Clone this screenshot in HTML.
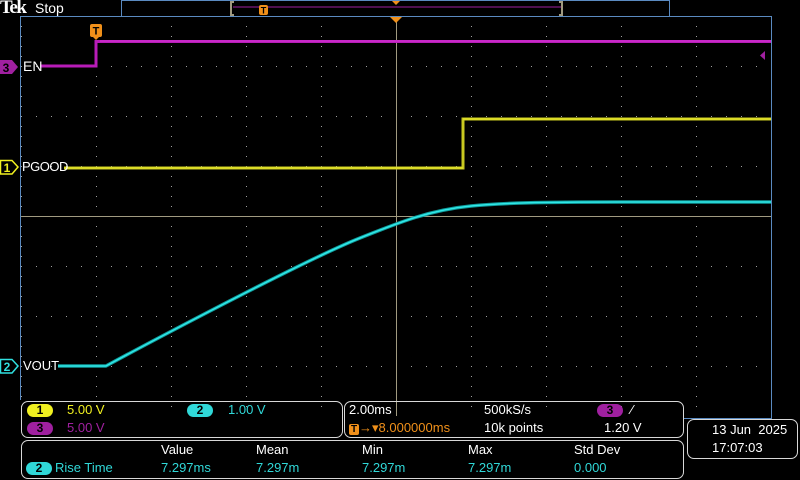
<!DOCTYPE html>
<html><head><meta charset="utf-8"><style>
html,body{margin:0;padding:0;background:#000;width:800px;height:480px;overflow:hidden}
body{position:relative;font-family:"Liberation Sans",sans-serif;color:#fff}
.t{position:absolute;font-size:13px;white-space:nowrap;line-height:14px}
.box{position:absolute;border:1px solid #d8d8d8;border-radius:7px}
.pill{display:inline-block;border-radius:8px;color:#000;font-weight:bold;text-align:center;width:26px;height:13px;line-height:13px;font-size:12px}
</style></head><body>
<svg width="800" height="480" style="position:absolute;left:0;top:0">
<defs>
<pattern id="g" x="21" y="16" width="75" height="50" patternUnits="userSpaceOnUse">
<g fill="#a0a0a0">
<rect x="0" y="0" width="1" height="1"/><rect x="0" y="10" width="1" height="1"/><rect x="0" y="20" width="1" height="1"/><rect x="0" y="30" width="1" height="1"/><rect x="0" y="40" width="1" height="1"/>
<rect x="15" y="0" width="1" height="1"/><rect x="30" y="0" width="1" height="1"/><rect x="45" y="0" width="1" height="1"/><rect x="60" y="0" width="1" height="1"/>
</g></pattern>
</defs>
<rect x="121.5" y="0.5" width="548" height="16" fill="none" stroke="#5a8ac0"/>
<line x1="233" y1="7" x2="561" y2="7" stroke="#a020a0" stroke-width="1"/>
<path d="M234 2 L231 2 L231 15 L234 15" fill="none" stroke="#a09a80" stroke-width="2"/>
<path d="M559 2 L562 2 L562 15 L559 15" fill="none" stroke="#a09a80" stroke-width="2"/>
<rect x="259" y="5" width="9" height="10" rx="2" fill="#f0901a"/>
<text x="263.5" y="13.5" font-size="9" font-weight="bold" text-anchor="middle" fill="#000" font-family="Liberation Sans">T</text>
<path d="M392 1 L400 1 L396 5 Z" fill="#f0901a"/>
<rect x="21" y="16" width="750" height="400" fill="url(#g)"/>
<line x1="21" y1="216.5" x2="771" y2="216.5" stroke="#a09a80"/>
<line x1="396.5" y1="16" x2="396.5" y2="416" stroke="#a09a80"/>
<path d="M20.5 400 L20.5 16.5 L771.5 16.5 L771.5 418.5 L683 418.5" fill="none" stroke="#5a8ac0"/>
<path d="M390 17 L402 17 L396 23 Z" fill="#f0901a"/>
<rect x="90" y="24" width="12" height="13" rx="2" fill="#f0901a"/>
<text x="96" y="34.5" font-size="11" font-weight="bold" text-anchor="middle" fill="#000" font-family="Liberation Sans">T</text>
<path d="M93 37 L99 37 L96 40Z" fill="#f0901a"/>
<path d="M40 66 L96 66 L96 41.5 L771 41.5" fill="none" stroke="#b81cb8" stroke-width="3"/>
<path d="M100 41 L771 41" fill="none" stroke="#e040e0" stroke-width="1" opacity="0.8"/>
<path d="M760 55.5 L765 51 L765 60 Z" fill="#a020a0"/>
<path d="M64 168 L463 168 L463 119 L771 119" fill="none" stroke="#c8c820" stroke-width="3"/>
<path d="M64 168 L463 168 M463 119 L771 119" fill="none" stroke="#f0f030" stroke-width="1"/>
<path id="v" d="M58 366 L106 366 C130 353 300 262 360 238 C400 222 430 210 471 206 C500 203 540 202 620 202 L771 202" fill="none" stroke="#109a9a" stroke-width="3.5" stroke-linejoin="round"/>
<path d="M58 366 L106 366 C130 353 300 262 360 238 C400 222 430 210 471 206 C500 203 540 202 620 202 L771 202" fill="none" stroke="#30e8e8" stroke-width="1.5" stroke-linejoin="round"/>
<path d="M0 60 L12 60 L18 67 L12 74 L0 74 Z" fill="#a020a0"/>
<text x="6" y="72" font-size="12" font-weight="bold" fill="#000" text-anchor="middle" font-family="Liberation Sans">3</text>
<path d="M0.5 160.5 L12 160.5 L18 167 L12 174 L0.5 174 Z" fill="#000" stroke="#f0f020" stroke-width="1.5"/>
<text x="7" y="172" font-size="12" font-weight="bold" fill="#f0f020" text-anchor="middle" font-family="Liberation Sans">1</text>
<path d="M0.5 359.5 L12 359.5 L18 366 L12 373 L0.5 373 Z" fill="#000" stroke="#30e0e0" stroke-width="1.5"/>
<text x="7" y="371" font-size="12" font-weight="bold" fill="#30e0e0" text-anchor="middle" font-family="Liberation Sans">2</text>
</svg>
<div class="t" style="left:0;top:0;font-family:'Liberation Serif',serif;font-weight:bold;font-size:19px;line-height:16px;letter-spacing:-1.5px">Tek</div>
<div class="t" style="left:35px;top:1px;font-size:14px">Stop</div>
<div class="t" style="left:23px;top:59px;font-size:14px">EN</div>
<div class="t" style="left:22px;top:160px;font-size:13px;letter-spacing:-0.5px">PGOOD</div>
<div class="t" style="left:23px;top:359px;font-size:13px">VOUT</div>

<div class="box" style="left:21px;top:401px;width:320px;height:35px"></div>
<div class="box" style="left:344px;top:401px;width:338px;height:35px"></div>
<div class="box" style="left:21px;top:440px;width:661px;height:37px"></div>
<div class="box" style="left:687px;top:419px;width:109px;height:38px"></div>

<div class="t" style="left:27px;top:403px"><span class="pill" style="background:#f0f020">1</span></div>
<div class="t" style="left:67px;top:403px;color:#f0f020">5.00 V</div>
<div class="t" style="left:187px;top:403px"><span class="pill" style="background:#30d8d8">2</span></div>
<div class="t" style="left:228px;top:403px;color:#30d8d8">1.00 V</div>
<div class="t" style="left:27px;top:421px"><span class="pill" style="background:#a020a0">3</span></div>
<div class="t" style="left:67px;top:421px;color:#a020a0">5.00 V</div>

<div class="t" style="left:349px;top:403px">2.00ms</div>
<div class="t" style="left:484px;top:403px">500kS/s</div>
<div class="t" style="left:597px;top:403px"><span class="pill" style="background:#a020a0">3</span></div>
<div class="t" style="left:631px;top:403px">∕</div>
<div class="t" style="left:349px;top:421px;color:#f0901a"><span style="display:inline-block;width:10px;height:11px;background:#f0901a;color:#000;font-size:10px;font-weight:bold;text-align:center;line-height:11px;border-radius:2px">T</span>→▾8.000000ms</div>
<div class="t" style="left:484px;top:421px">10k points</div>
<div class="t" style="left:604px;top:421px">1.20 V</div>

<div class="t" style="left:161px;top:443px">Value</div>
<div class="t" style="left:256px;top:443px">Mean</div>
<div class="t" style="left:362px;top:443px">Min</div>
<div class="t" style="left:468px;top:443px">Max</div>
<div class="t" style="left:574px;top:443px">Std Dev</div>
<div class="t" style="left:26px;top:461px"><span class="pill" style="background:#30d8d8">2</span></div>
<div class="t" style="left:55px;top:461px;color:#30d8d8">Rise Time</div>
<div class="t" style="left:161px;top:461px;color:#30d8d8">7.297ms</div>
<div class="t" style="left:256px;top:461px;color:#30d8d8">7.297m</div>
<div class="t" style="left:362px;top:461px;color:#30d8d8">7.297m</div>
<div class="t" style="left:468px;top:461px;color:#30d8d8">7.297m</div>
<div class="t" style="left:574px;top:461px;color:#30d8d8">0.000</div>

<div class="t" style="left:712px;top:423px">13 Jun &nbsp;2025</div>
<div class="t" style="left:712px;top:441px">17:07:03</div>
</body></html>
